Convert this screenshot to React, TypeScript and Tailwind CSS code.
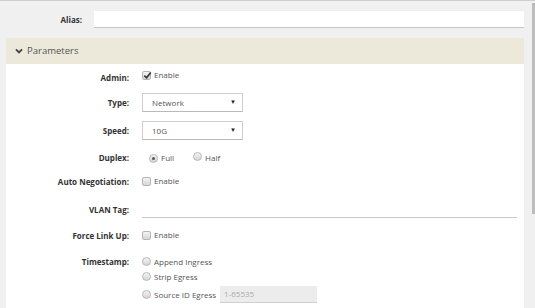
import type { ReactNode } from 'react';

// ── Small form bits ──
function Check({ checked }: { checked?: boolean }) {
  return (
    <span className="relative inline-block w-[9px] h-[9px] rounded-[2px] border border-[#b5b5b5] bg-gradient-to-b from-[#f4f4f4] to-[#d6d6d6] shrink-0">
      {checked && (
        <svg viewBox="0 0 10 10" className="absolute left-[0px] top-[-1px] w-[9px] h-[9px]">
          <path d="M1.5 5.2 L4 7.6 L8.6 1.8" fill="none" stroke="#333" strokeWidth="1.8" />
        </svg>
      )}
    </span>
  );
}

function Radio({ checked }: { checked?: boolean }) {
  return (
    <span className="relative inline-flex items-center justify-center w-[9px] h-[9px] rounded-full border border-[#b8b8b8] bg-gradient-to-b from-[#f4f4f4] to-[#d4d4d4] shrink-0">
      {checked && <span className="w-[3px] h-[3px] rounded-full bg-[#555]" />}
    </span>
  );
}

function Select({ value }: { value: string }) {
  return (
    <div className="w-[101px] h-[19px] flex items-center justify-between pl-[9px] pr-[6px] bg-white border border-[#cfcfcf] border-b-[#b9b9b9] text-[8px] text-[#555]">
      <span>{value}</span>
      <span className="text-[6px] text-[#222]">▼</span>
    </div>
  );
}

function Row({ label, className, children }: { label: string; className: string; children: ReactNode }) {
  return (
    <div className={`flex ${className}`}>
      <div className="w-[123px] shrink-0 text-right text-[8px] font-bold text-[#333] leading-[20px]">{label}</div>
      <div className="ml-[13px] flex-1">{children}</div>
    </div>
  );
}

// ── Page ──
export default function App() {
  return (
    <div
      className="w-[535px] h-[308px] overflow-hidden bg-[#f0f0f0] border-t border-[#cfcfcf] flex"
      style={{ fontFamily: '"Open Sans", "Liberation Sans", sans-serif' }}
    >
      <div className="flex-1 pl-[6px] pr-[8px]">
        {/* Alias */}
        <div className="flex items-center mt-[10px] h-[17px]">
          <div className="w-[76px] text-right text-[8px] font-bold text-[#333]">Alias:</div>
          <div className="ml-[12px] flex-1 h-[17px] bg-white border-b border-[#c6c6c6]" />
        </div>

        {/* Parameters header */}
        <div className="mt-[10px] h-[26px] bg-[#ece9da] flex items-center pl-[9px] text-[9.5px] text-[#555]">
          <svg viewBox="0 0 10 10" className="w-[8px] h-[8px] mr-[4px]">
            <path d="M1.2 3 L5 6.8 L8.8 3" fill="none" stroke="#444" strokeWidth="2.4" />
          </svg>
          <span>Parameters</span>
        </div>

        {/* Parameters body */}
        <div className="bg-white h-[260px] pt-[3px]">
          <Row label="Admin:" className="h-[20px] mt-[1px]">
            <label className="flex items-center gap-[3px] mt-[1px] text-[8px] text-[#555]">
              <Check checked />
              <span>Enable</span>
            </label>
          </Row>

          <Row label="Type:" className="mt-[5px] h-[19px] items-center">
            <Select value="Network" />
          </Row>

          <Row label="Speed:" className="mt-[9px] h-[19px] items-center">
            <Select value="10G" />
          </Row>

          <Row label="Duplex:" className="mt-[8px] h-[20px]">
            <div className="flex items-center mt-[4px] ml-[7px] text-[8px] text-[#555]">
              <Radio checked />
              <span className="ml-[3px]">Full</span>
              <span className="ml-[19px]"><Radio /></span>
              <span className="ml-[3px]">Half</span>
            </div>
          </Row>

          <Row label="Auto Negotiation:" className="mt-[4px] h-[20px]">
            <label className="flex items-center gap-[3px] mt-[3px] text-[8px] text-[#555]">
              <Check />
              <span>Enable</span>
            </label>
          </Row>

          <Row label="VLAN Tag:" className="mt-[8px] h-[20px]">
            <div className="h-[18px] border-b border-[#c8c8c8] mr-[7px]" />
          </Row>

          <Row label="Force Link Up:" className="mt-[6px] h-[20px]">
            <label className="flex items-center gap-[3px] mt-[3px] text-[8px] text-[#555]">
              <Check />
              <span>Enable</span>
            </label>
          </Row>

          <Row label="Timestamp:" className="mt-[6px]">
            <div className="flex flex-col text-[8px] text-[#555] mt-[2px]">
              <label className="flex items-center gap-[3px] h-[15px]">
                <Radio />
                <span>Append Ingress</span>
              </label>
              <label className="flex items-center gap-[3px] h-[15px]">
                <Radio />
                <span>Strip Egress</span>
              </label>
              <label className="flex items-center gap-[3px] mt-[2px]">
                <Radio />
                <span>Source ID Egress</span>
                <div className="ml-[1px] w-[97px] h-[17px] bg-[#ececec] border-b border-[#cfcfcf] flex items-center pl-[4px] text-[#aaa]">
                  1-65535
                </div>
              </label>
            </div>
          </Row>
        </div>
      </div>

      {/* scrollbar */}
      <div className="w-[3px] shrink-0 pt-[2px]">
        <div className="h-[211px] bg-[#bdbdbd]" />
      </div>
    </div>
  );
}
